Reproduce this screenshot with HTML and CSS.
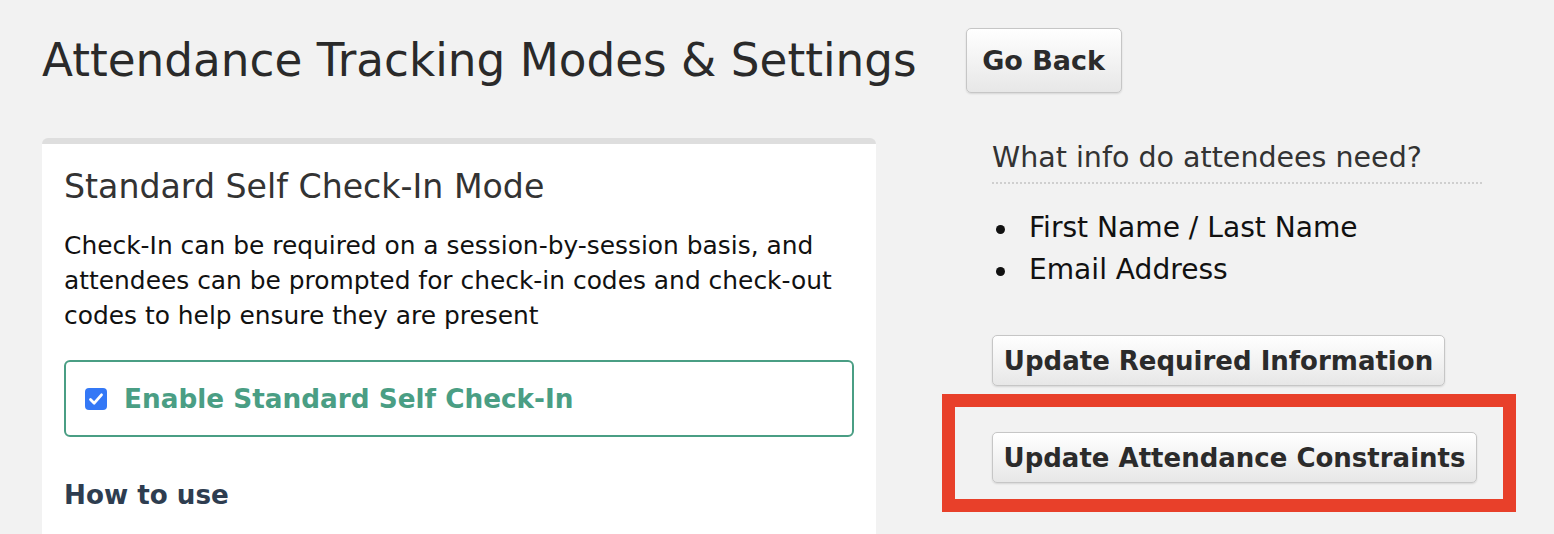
FILE: index.html
```html
<!DOCTYPE html>
<html lang="en">
<head>
<meta charset="utf-8">
<title>Attendance Tracking Modes &amp; Settings</title>
<link rel="stylesheet" href="styles.css">
</head>
<body>
<div class="page">
  <header class="top">
    <h1 class="title">Attendance Tracking Modes &amp; Settings</h1>
    <button class="btn btn-back" type="button">Go Back</button>
  </header>
  <div class="main">
    <section class="card">
      <h2 class="card-title">Standard Self Check-In Mode</h2>
      <p class="card-text">Check-In can be required on a session-by-session basis, and attendees can be prompted for check-in codes and check-out codes to help ensure they are present</p>
      <label class="enable">
        <span class="cb"><svg viewBox="0 0 22 22" width="22" height="22"><path d="M5.5 11.5 L9.2 15.2 L16.5 6.8" fill="none" stroke="#fff" stroke-width="2.8" stroke-linecap="round" stroke-linejoin="round"/></svg></span>
        <span class="enable-text">Enable Standard Self Check-In</span>
      </label>
      <h3 class="howto">How to use</h3>
    </section>
    <aside class="side">
      <h4 class="side-title">What info do attendees need?</h4>
      <ul class="info-list">
        <li>First Name / Last Name</li>
        <li>Email Address</li>
      </ul>
      <button class="btn btn-info" type="button">Update Required Information</button>
      <div class="highlight">
        <button class="btn btn-constraints" type="button">Update Attendance Constraints</button>
      </div>
    </aside>
  </div>
</div>
</body>
</html>
```

FILE: styles.css
```css
html, body {
  margin: 0;
  padding: 0;
  background: #f2f2f2;
  height: 100%;
  overflow: hidden;
}
body {
  font-family: "DejaVu Sans", "Liberation Sans", sans-serif;
  color: #111;
}
.page {
  padding: 28px 0 0 42px;
}
.top {
  display: flex;
  align-items: center;
  height: 65px;
}
.title {
  margin: 0;
  font-size: 45.3px;
  font-weight: normal;
  line-height: 65px;
  color: #2a2a2a;
}
.btn {
  font-family: "DejaVu Sans", "Liberation Sans", sans-serif;
  font-weight: bold;
  color: #2b2b2b;
  background: linear-gradient(#ffffff, #e7e7e7);
  border: 1px solid #c6c6c6;
  border-radius: 5px;
  box-shadow: 0 1px 2px rgba(0,0,0,0.12);
  padding: 0;
  cursor: pointer;
}
.btn-back {
  margin-left: 49px;
  width: 156px;
  height: 65px;
  font-size: 27px;
}
.main {
  display: flex;
  margin-top: 45px;
  gap: 116px;
}
.card {
  width: 790px;
  padding: 0 22px 60px;
  background: #fff;
  border-top: 6px solid #dedede;
  border-radius: 6px 6px 0 0;
}
.card-title {
  margin: 23px 0 0;
  font-size: 33.2px;
  line-height: 40px;
  font-weight: normal;
  color: #333;
}
.card-text {
  margin: 21px 0 0;
  font-size: 24.9px;
  line-height: 35px;
  color: #111;
  max-width: 790px;
}
.enable {
  display: flex;
  align-items: center;
  margin-top: 27px;
  height: 73px;
  border: 2px solid #4a9e84;
  border-radius: 6px;
  padding-left: 19px;
}
.cb {
  width: 22px;
  height: 22px;
  border-radius: 4px;
  background: #3478f6;
  display: flex;
}
.enable-text {
  margin-left: 17px;
  font-size: 26.3px;
  font-weight: bold;
  color: #4a9e84;
}
.howto {
  margin: 40px 0 0;
  font-size: 26.2px;
  line-height: 36px;
  font-weight: bold;
  color: #2e3d50;
}
.side {
  width: 490px;
  display: flex;
  flex-direction: column;
  align-items: flex-start;
}
.side-title {
  align-self: stretch;
  margin: 2px 0 0;
  padding-bottom: 6px;
  font-size: 28.5px;
  line-height: 36px;
  font-weight: normal;
  color: #333;
  border-bottom: 2px dotted #cfcfcf;
}
.info-list {
  list-style: none;
  margin: 23px 0 0;
  padding: 0;
  font-size: 28.1px;
  line-height: 42px;
  color: #111;
}
.info-list li {
  display: flex;
  align-items: center;
}
.info-list li::before {
  content: "";
  width: 9px;
  height: 9px;
  border-radius: 50%;
  background: #111;
  margin: 2px 24px 0 4px;
}
.btn-info {
  margin-top: 44px;
  width: 453px;
  height: 51px;
  font-size: 26px;
}
.highlight {
  margin: 8px 0 0 -50px;
  border: 13px solid #e8402a;
  padding: 25px 26px 16px 37px;
}
.btn-constraints {
  width: 485px;
  height: 51px;
  font-size: 26px;
}
```
